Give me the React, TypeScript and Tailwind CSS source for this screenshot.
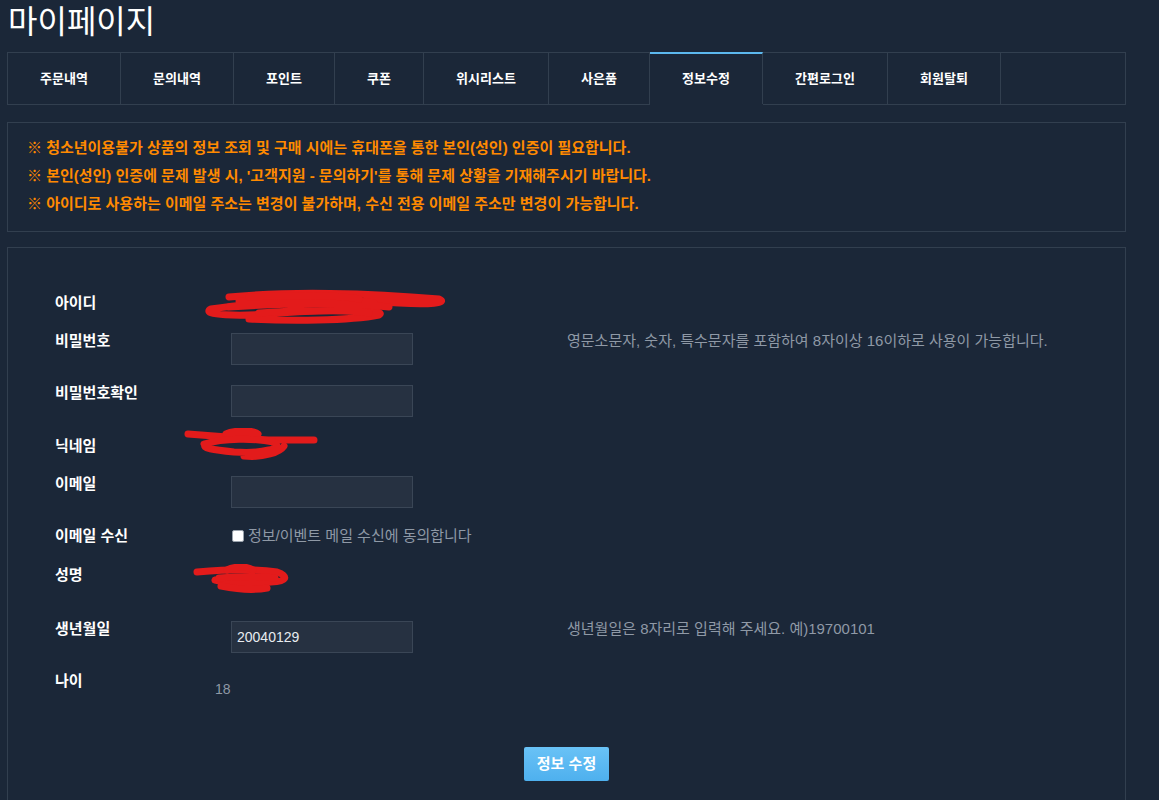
import React from 'react';

const tabs = [
  { label: '주문내역', w: 'w-[113px]' },
  { label: '문의내역', w: 'w-[113px]' },
  { label: '포인트', w: 'w-[101px]' },
  { label: '쿠폰', w: 'w-[89px]' },
  { label: '위시리스트', w: 'w-[125px]' },
  { label: '사은품', w: 'w-[101px]' },
  { label: '정보수정', w: 'w-[113px]', active: true },
  { label: '간편로그인', w: 'w-[125px]' },
  { label: '회원탈퇴', w: 'w-[113px]' },
];

const notices = [
  '※ 청소년이용불가 상품의 정보 조회 및 구매 시에는 휴대폰을 통한 본인(성인) 인증이 필요합니다.',
  "※ 본인(성인) 인증에 문제 발생 시, '고객지원 - 문의하기'를 통해 문제 상황을 기재해주시기 바랍니다.",
  '※ 아이디로 사용하는 이메일 주소는 변경이 불가하며, 수신 전용 이메일 주소만 변경이 가능합니다.',
];

// red redaction marks drawn over the private values
const Scribble = ({ w, h, d }: { w: number; h: number; d: string[] }) => (
  <svg width={w} height={h} viewBox={`0 0 ${w} ${h}`} className="block">
    {d.map((p, i) => (
      <path key={i} d={p} fill="none" stroke="#e31b1b" strokeWidth={7} strokeLinecap="round" strokeLinejoin="round" />
    ))}
  </svg>
);

const Input = ({ value }: { value?: string }) => (
  <div className="w-[182px] h-[32px] bg-[#263141] border border-[#3a4656] px-[5px] flex items-center text-[14px] text-[#e8ecf0]">
    {value}
  </div>
);

const Label = ({ children }: { children: React.ReactNode }) => (
  <div className="w-[176px] shrink-0 text-[15px] leading-[16px] font-bold text-white">{children}</div>
);

const Help = ({ children }: { children: React.ReactNode }) => (
  <div className="ml-[154px] text-[15px] leading-[16px] text-[#8f99a6]">{children}</div>
);

export default function App() {
  return (
    <div
      className="min-h-screen bg-[#1b2738] text-white"
      style={{ fontFamily: '"Liberation Sans", "Noto Sans CJK KR", sans-serif' }}
    >
      <h1 className="pl-[8px] pt-[2px] h-[52px] text-[32px] leading-[40px] font-normal text-white">마이페이지</h1>

      <div className="ml-[7px] w-[1119px]">
        {/* tabs */}
        <div className="flex h-[53px] border-t border-l border-r border-[#323f4f]">
          {tabs.map((t) => (
            <div
              key={t.label}
              className={`${t.w} shrink-0 h-full flex items-center justify-center text-[13px] font-bold border-r border-[#323f4f] ${
                t.active ? 'relative -mt-px border-t-2 border-t-[#5cb8ee] h-[54px]' : 'border-b'
              }`}
            >
              {t.label}
            </div>
          ))}
          <div className="flex-1 border-b border-[#323f4f]" />
        </div>

        {/* notice */}
        <div className="mt-[17px] border border-[#323f4f] pl-[19px] pt-[11px] pb-[13px]">
          {notices.map((n) => (
            <p key={n} className="text-[15px] leading-[28px] font-bold text-[#ff8a00]">
              {n}
            </p>
          ))}
        </div>

        {/* form */}
        <div className="mt-[15px] border border-b-0 border-[#323f4f] pl-[47px] pt-[47px] pb-[20px]">
          <div className="flex h-[38px]">
            <Label>아이디</Label>
            <div className="-ml-[32px] -mt-[6px]">
              <Scribble
                w={250}
                h={38}
                d={[
                  'M30 8 C90 2 170 4 240 10 C250 14 230 16 200 14 C150 10 60 12 12 20 C0 26 40 28 80 24 C140 20 190 20 180 26 C150 32 90 32 50 30',
                  'M40 12 C90 8 150 10 175 14 M30 18 C90 14 150 14 190 18 M60 24 C110 20 160 22 170 24',
                  'M50 8 C100 6 140 6 160 10',
                ]}
              />
            </div>
          </div>
          <div className="flex h-[52px]">
            <Label>비밀번호</Label>
            <Input />
            <Help>영문소문자, 숫자, 특수문자를 포함하여 8자이상 16이하로 사용이 가능합니다.</Help>
          </div>
          <div className="flex h-[53px]">
            <Label>비밀번호확인</Label>
            <Input />
          </div>
          <div className="flex h-[38px]">
            <Label>닉네임</Label>
            <div className="-ml-[47px] -mt-[10px]">
              <Scribble
                w={136}
                h={38}
                d={[
                  'M4 6 C30 8 60 10 84 12 C100 12 120 12 130 12',
                  'M42 6 C50 2 70 2 74 6 C60 8 48 8 42 6',
                  'M20 16 C40 10 70 10 90 14 C100 20 80 26 50 24 C30 22 16 20 22 16 M60 28 C80 30 96 24 100 18',
                ]}
              />
            </div>
          </div>
          <div className="flex h-[52px]">
            <Label>이메일</Label>
            <Input />
          </div>
          <div className="flex h-[39px]">
            <Label>이메일 수신</Label>
            <label className="flex items-start gap-[4px] text-[15px] leading-[16px] text-[#8f99a6]">
              <span className="mt-[2px] w-[12px] h-[12px] bg-white rounded-[2px] border border-[#9aa3ad] ml-[1px]" />
              정보/이벤트 메일 수신에 동의합니다
            </label>
          </div>
          <div className="flex h-[54px]">
            <Label>성명</Label>
            <div className="-ml-[40px] -mt-[3px]">
              <Scribble
                w={104}
                h={30}
                d={[
                  'M6 8 C30 6 60 4 86 8 C98 12 96 18 80 18 C60 20 40 20 24 16',
                  'M36 6 C44 2 56 2 62 6 M28 14 C50 12 70 12 84 14 M30 22 C50 26 66 26 76 24',
                ]}
              />
            </div>
          </div>
          <div className="flex h-[52px]">
            <Label>생년월일</Label>
            <Input value="20040129" />
            <Help>생년월일은 8자리로 입력해 주세요. 예)19700101</Help>
          </div>
          <div className="flex h-[74px]">
            <Label>나이</Label>
            <div className="-ml-[16px] mt-[8px] text-[14px] leading-[16px] text-[#8f99a6]">18</div>
          </div>
          <div className="flex justify-center -ml-[47px]">
            <button className="w-[85px] h-[34px] rounded-[2px] bg-gradient-to-b from-[#69c2f6] to-[#4eb0ee] text-[15px] font-bold text-white">
              정보 수정
            </button>
          </div>
        </div>
      </div>
    </div>
  );
}
